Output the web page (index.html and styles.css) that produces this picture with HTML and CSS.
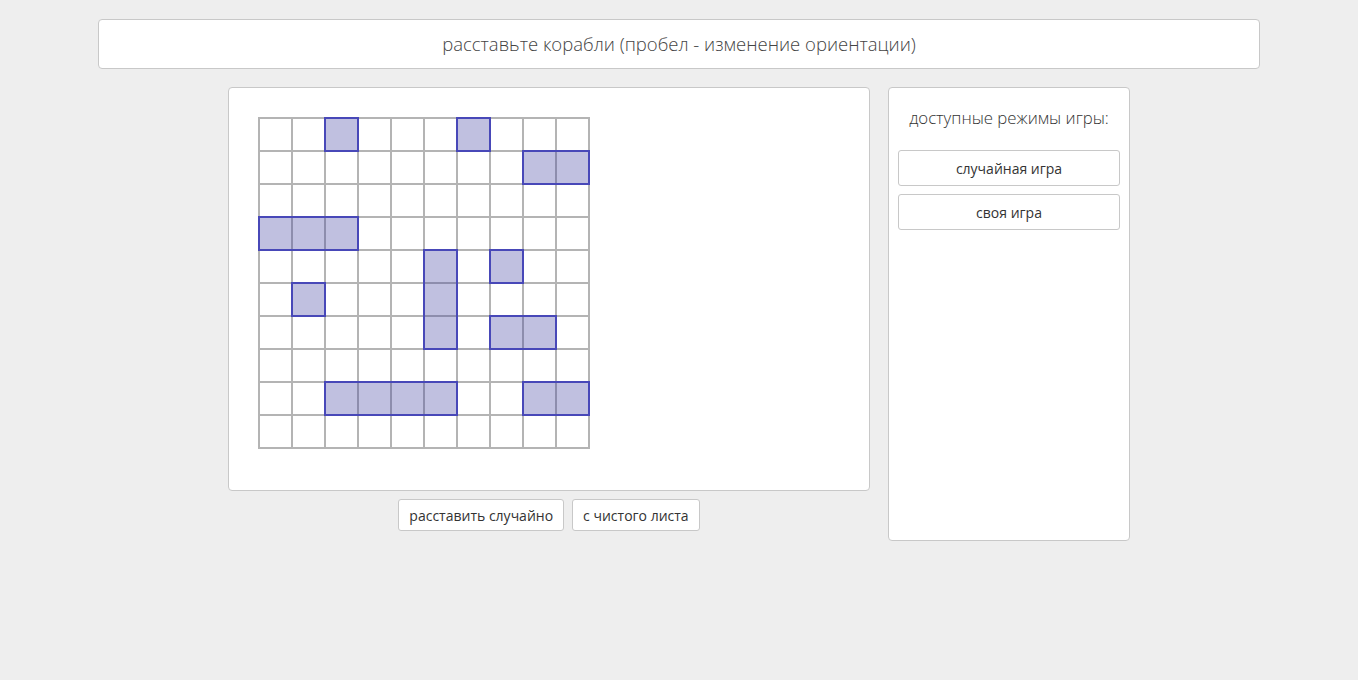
FILE: index.html
```html
<!DOCTYPE html>
<html lang="ru">
<head>
<meta charset="utf-8">
<title>Морской бой</title>
<link rel="stylesheet" href="styles.css">
</head>
<body>
<div class="page">
  <div class="header">расставьте корабли (пробел - изменение ориентации)</div>
  <div class="main">
    <div class="left">
      <div class="panel board-panel">
        <div class="board" id="board">
          <div class="cells">
            <div class="c"></div><div class="c"></div><div class="c"></div><div class="c"></div><div class="c"></div><div class="c"></div><div class="c"></div><div class="c"></div><div class="c"></div><div class="c"></div>
            <div class="c"></div><div class="c"></div><div class="c"></div><div class="c"></div><div class="c"></div><div class="c"></div><div class="c"></div><div class="c"></div><div class="c"></div><div class="c"></div>
            <div class="c"></div><div class="c"></div><div class="c"></div><div class="c"></div><div class="c"></div><div class="c"></div><div class="c"></div><div class="c"></div><div class="c"></div><div class="c"></div>
            <div class="c"></div><div class="c"></div><div class="c"></div><div class="c"></div><div class="c"></div><div class="c"></div><div class="c"></div><div class="c"></div><div class="c"></div><div class="c"></div>
            <div class="c"></div><div class="c"></div><div class="c"></div><div class="c"></div><div class="c"></div><div class="c"></div><div class="c"></div><div class="c"></div><div class="c"></div><div class="c"></div>
            <div class="c"></div><div class="c"></div><div class="c"></div><div class="c"></div><div class="c"></div><div class="c"></div><div class="c"></div><div class="c"></div><div class="c"></div><div class="c"></div>
            <div class="c"></div><div class="c"></div><div class="c"></div><div class="c"></div><div class="c"></div><div class="c"></div><div class="c"></div><div class="c"></div><div class="c"></div><div class="c"></div>
            <div class="c"></div><div class="c"></div><div class="c"></div><div class="c"></div><div class="c"></div><div class="c"></div><div class="c"></div><div class="c"></div><div class="c"></div><div class="c"></div>
            <div class="c"></div><div class="c"></div><div class="c"></div><div class="c"></div><div class="c"></div><div class="c"></div><div class="c"></div><div class="c"></div><div class="c"></div><div class="c"></div>
            <div class="c"></div><div class="c"></div><div class="c"></div><div class="c"></div><div class="c"></div><div class="c"></div><div class="c"></div><div class="c"></div><div class="c"></div><div class="c"></div>
          </div>
          <div class="ship" style="left:66px;top:0px;width:35px;height:35px"></div>
          <div class="ship" style="left:198px;top:0px;width:35px;height:35px"></div>
          <div class="ship" style="left:264px;top:33px;width:68px;height:35px"></div>
          <div class="ship" style="left:0px;top:99px;width:101px;height:35px"></div>
          <div class="ship" style="left:165px;top:132px;width:35px;height:101px"></div>
          <div class="ship" style="left:231px;top:132px;width:35px;height:35px"></div>
          <div class="ship" style="left:33px;top:165px;width:35px;height:35px"></div>
          <div class="ship" style="left:231px;top:198px;width:68px;height:35px"></div>
          <div class="ship" style="left:66px;top:264px;width:134px;height:35px"></div>
          <div class="ship" style="left:264px;top:264px;width:68px;height:35px"></div>
        </div>
      </div>
      <div class="actions">
        <button class="btn">расставить случайно</button>
        <button class="btn">с чистого листа</button>
      </div>
    </div>
    <div class="panel modes">
      <div class="modes-title">доступные режимы игры:</div>
      <button class="btn mode-btn">случайная игра</button>
      <button class="btn mode-btn">своя игра</button>
    </div>
  </div>
</div>
</body>
</html>
```
FILE: styles.css
```css
html, body {
  margin: 0;
  padding: 0;
  background: #eeeeee;
  font-family: "Open Sans", "Noto Sans", sans-serif;
  color: #333;
}
.page {
  width: 1162px;
  margin: 0 auto;
  padding-top: 19px;
}
.header {
  height: 50px;
  box-sizing: border-box;
  background: #fff;
  border: 1px solid #c8c8c8;
  border-radius: 4px;
  display: flex;
  align-items: center;
  justify-content: center;
  font-size: 18.5px;
  font-weight: 300;
  color: #444;
  padding-bottom: 2px;
}
.main {
  display: flex;
  justify-content: center;
  gap: 18px;
  margin-top: 18px;
}
.left {
  display: flex;
  flex-direction: column;
  align-items: center;
  padding-bottom: 10px;
}
.panel {
  background: #fff;
  border: 1px solid #c8c8c8;
  border-radius: 4px;
  box-sizing: border-box;
}
.board-panel {
  width: 642px;
  height: 404px;
  padding: 29px 0 0 29px;
}
.board {
  position: relative;
  width: 332px;
  height: 332px;
}
.cells {
  display: grid;
  grid-template-columns: repeat(10, 33px);
  grid-template-rows: repeat(10, 33px);
  border-right: 2px solid #b4b4b4;
  border-bottom: 2px solid #b4b4b4;
  width: 330px;
}
.c {
  border-left: 2px solid #b4b4b4;
  border-top: 2px solid #b4b4b4;
}
.ship {
  position: absolute;
  box-sizing: border-box;
  border: 2px solid #4848b8;
  background: rgba(60, 60, 160, 0.32);
}
.actions {
  display: flex;
  gap: 8px;
  margin-top: 8px;
}
.btn {
  font-family: "Open Sans", "Noto Sans", sans-serif;
  font-size: 14px;
  color: #333;
  background: #fff;
  border: 1px solid #c8c8c8;
  border-radius: 3px;
  height: 32px;
  padding: 0 10px;
  cursor: pointer;
}
.modes {
  width: 242px;
  padding: 0 9px;
  display: flex;
  flex-direction: column;
}
.modes-title {
  text-align: center;
  font-size: 16.8px;
  font-weight: 300;
  color: #333;
  margin-top: 19px;
  margin-bottom: 21px;
  line-height: 22px;
}
.mode-btn {
  width: 100%;
  height: 36px;
  margin-bottom: 8px;
}
```
